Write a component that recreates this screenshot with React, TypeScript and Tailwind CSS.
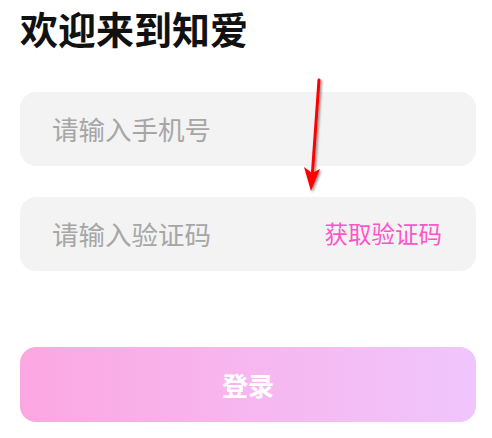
import React from "react";

export default function App() {
  return (
    <div
      className="relative w-[492px] h-[438px] bg-white pl-5 pr-4 overflow-hidden"
      style={{ fontFamily: '"Noto Sans CJK SC", "Noto Sans", sans-serif' }}
    >
      <h1 className="pt-[5px] text-[38px] leading-[46px] font-bold text-[#111111]">欢迎来到知爱</h1>
      <div className="mt-[41px] h-[74px] rounded-[16px] bg-[#f3f3f3] flex items-center pl-8 pr-8">
        <span className="text-[26.5px] leading-none text-[#a6a6a6]">请输入手机号</span>
      </div>
      <div className="mt-[31px] h-[74px] rounded-[16px] bg-[#f3f3f3] flex items-center justify-between pl-8 pr-[34px]">
        <span className="text-[26.5px] leading-none text-[#a6a6a6]">请输入验证码</span>
        <span className="text-[23.5px] leading-none text-[#fd56c9]">获取验证码</span>
      </div>
      <button className="mt-[76px] w-full h-[75px] rounded-[16px] bg-gradient-to-r from-[#fca7e1] to-[#f0c5fd] flex items-center justify-center">
        <span className="text-[26px] leading-none font-bold text-white">登录</span>
      </button>
      <svg
        className="absolute left-0 top-0 pointer-events-none"
        width="492"
        height="438"
        viewBox="0 0 492 438"
      >
        <defs>
          <filter id="sh" x="-50%" y="-50%" width="200%" height="200%">
            <feDropShadow dx="1.5" dy="1.5" stdDeviation="1.2" floodColor="#000" floodOpacity="0.45" />
          </filter>
        </defs>
        <g filter="url(#sh)">
          <line x1="319" y1="80" x2="312.5" y2="172" stroke="#ff0000" strokeWidth="3" strokeLinecap="round" />
          <polygon points="304,167 312,173 320,169 311,191" fill="#ff0000" />
        </g>
      </svg>
    </div>
  );
}
